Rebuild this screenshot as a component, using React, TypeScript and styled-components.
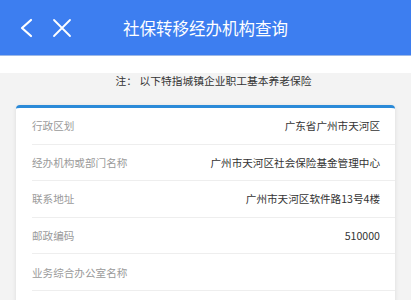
import React from 'react';
import styled, { createGlobalStyle } from 'styled-components';

const Global = createGlobalStyle`
  body {
    margin: 0;
    background: #f3f3f3;
    font-family: "Noto Sans CJK SC", "Noto Sans", sans-serif;
  }
`;

const Header = styled.header`
  position: relative;
  height: 55px;
  background: #3d7ef0;
  border-bottom: 1px solid #9db8e6;
  display: flex;
  align-items: center;
  justify-content: center;
`;

const Nav = styled.div`
  position: absolute;
  left: 18px;
  top: 0;
  bottom: 0;
  display: flex;
  align-items: center;
  gap: 18px;
`;

const Title = styled.h1`
  margin: 0;
  color: #fff;
  font-size: 16.5px;
  font-weight: 400;
  letter-spacing: 0;
`;

const Band = styled.div`
  height: 17px;
  background: #fff;
`;

const Note = styled.p`
  margin: 0;
  padding-top: 0;
  text-align: center;
  font-size: 10.75px;
  line-height: 16px;
  color: #333;
  padding-left: 16px;
`;

const Card = styled.section`
  margin: 16px 16px 0;
  background: #fff;
  border-top: 3px solid #2b8ad8;
  border-radius: 4px 4px 0 0;
  box-shadow: 0 1px 4px rgba(0, 0, 0, 0.1);
`;

const Row = styled.div`
  margin-left: 16px;
  padding-right: 15px;
  height: 36.6px;
  display: flex;
  align-items: center;
  justify-content: space-between;
  border-bottom: 1px solid #eeeeee;
  box-sizing: border-box;
  font-size: 10.6px;
`;

const Label = styled.span`
  color: #9a9a9a;
`;

const Value = styled.span`
  color: #333;
`;

const rows: [string, string][] = [
  ['行政区划', '广东省广州市天河区'],
  ['经办机构或部门名称', '广州市天河区社会保险基金管理中心'],
  ['联系地址', '广州市天河区软件路13号4楼'],
  ['邮政编码', '510000'],
  ['业务综合办公室名称', ''],
  ['业务综合办公室电话', ''],
];

export default function App() {
  return (
    <>
      <Global />
      <Header>
        <Nav>
          <svg width="16" height="20" viewBox="0 0 16 20">
            <path d="M13 2 L4 10 L13 18" fill="none" stroke="#fff" strokeWidth="2.2" strokeLinecap="round" strokeLinejoin="round" />
          </svg>
          <svg width="20" height="20" viewBox="0 0 20 20">
            <path d="M2 2 L18 18 M18 2 L2 18" fill="none" stroke="#fff" strokeWidth="1.8" strokeLinecap="round" />
          </svg>
        </Nav>
        <Title>社保转移经办机构查询</Title>
      </Header>
      <Band />
      <Note>注： 以下特指城镇企业职工基本养老保险</Note>
      <Card>
        {rows.map(([k, v]) => (
          <Row key={k}>
            <Label>{k}</Label>
            <Value>{v}</Value>
          </Row>
        ))}
      </Card>
    </>
  );
}
